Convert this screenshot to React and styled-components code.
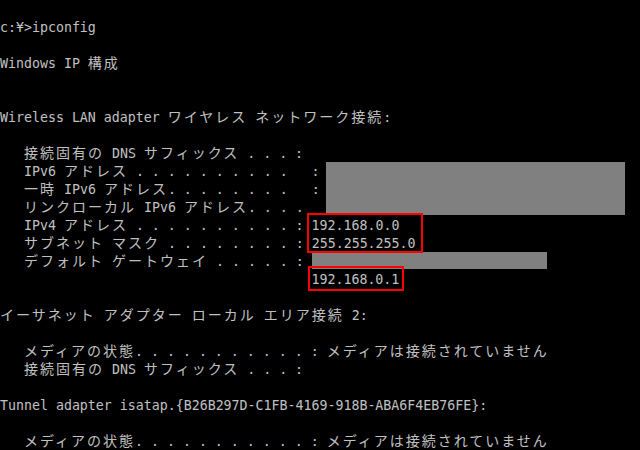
import React from "react";
import styled, { createGlobalStyle } from "styled-components";

const GlobalStyle = createGlobalStyle`
  html, body {
    margin: 0;
    padding: 0;
    background: #000;
  }
`;

const Screen = styled.div`
  position: relative;
  width: 640px;
  height: 450px;
  overflow: hidden;
  box-sizing: border-box;
  padding-top: 19px;
  background: #000;
  color: #c0c0c0;
  font-family: "DejaVu Sans Mono", "Liberation Mono", monospace;
  font-size: 13.288px;
  -webkit-font-smoothing: none;
`;

const Line = styled.div`
  height: 18px;
  line-height: 18px;
  white-space: pre;
`;

const Wide = styled.span`
  font-family: "Noto Sans CJK JP", "Noto Sans CJK SC", sans-serif;
  font-size: 14px;
  letter-spacing: 2px;
  line-height: 10px;
`;

const Redaction = styled.div`
  position: absolute;
  left: ${(p) => p.$x}px;
  top: ${(p) => p.$y}px;
  width: ${(p) => p.$w}px;
  height: ${(p) => p.$h}px;
  background: #808080;
`;

const Highlight = styled.div`
  position: absolute;
  left: ${(p) => p.$x}px;
  top: ${(p) => p.$y}px;
  width: ${(p) => p.$w}px;
  height: ${(p) => p.$h}px;
  box-sizing: border-box;
  border: 2px solid #ff0000;
`;

const dots = (n) => Array.from({ length: n }, () => ".").join(" ");

const lines = [
  "c:¥>ipconfig",
  "",
  "Windows IP 構成",
  "",
  "",
  "Wireless LAN adapter ワイヤレス ネットワーク接続:",
  "",
  "   接続固有の DNS サフィックス " + dots(3) + " :",
  "   IPv6 アドレス " + dots(10) + "   :",
  "   一時 IPv6 アドレス" + dots(8) + "   :",
  "   リンクローカル IPv6 アドレス" + dots(4) + "   :",
  "   IPv4 アドレス " + dots(10) + " : 192.168.0.0",
  "   サブネット マスク " + dots(8) + " : 255.255.255.0",
  "   デフォルト ゲートウェイ " + dots(5) + " :",
  " ".repeat(39) + "192.168.0.1",
  "",
  "イーサネット アダプター ローカル エリア接続 2:",
  "",
  "   メディアの状態" + dots(11) + " : メディアは接続されていません",
  "   接続固有の DNS サフィックス " + dots(3) + " :",
  "",
  "Tunnel adapter isatap.{B26B297D-C1FB-4169-918B-ABA6F4EB76FE}:",
  "",
  "   メディアの状態" + dots(11) + " : メディアは接続されていません",
];

const WIDE_RE = /[\u3000-\u9fff\uff00-\uffef]/;

function splitRuns(text) {
  const runs = [];
  for (const ch of text) {
    const wide = WIDE_RE.test(ch);
    const last = runs[runs.length - 1];
    if (last && last.wide === wide) last.text += ch;
    else runs.push({ wide, text: ch });
  }
  return runs;
}

function ConsoleLine({ text }) {
  return (
    <Line>
      {text === ""
        ? " "
        : splitRuns(text).map((r, i) =>
            r.wide ? <Wide key={i}>{r.text}</Wide> : <React.Fragment key={i}>{r.text}</React.Fragment>
          )}
    </Line>
  );
}

export default function App() {
  return (
    <>
      <GlobalStyle />
      <Screen>
        {lines.map((t, i) => (
          <ConsoleLine key={i} text={t} />
        ))}
        <Redaction $x={326} $y={162} $w={299} $h={53} />
        <Redaction $x={312} $y={252} $w={235} $h={17} />
        <Highlight $x={307} $y={213} $w={116} $h={40} />
        <Highlight $x={308} $y={266} $w={96} $h={25} />
      </Screen>
    </>
  );
}
